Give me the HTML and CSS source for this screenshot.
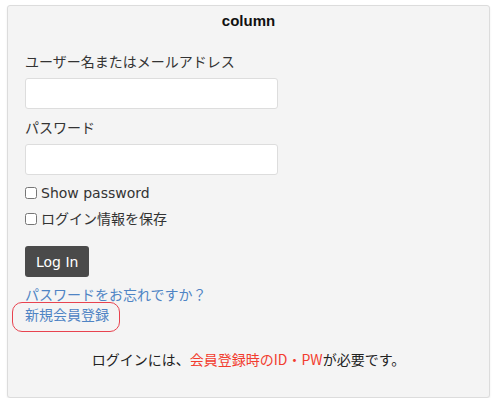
FILE: index.html
```html
<!DOCTYPE html>
<html lang="ja">
<head>
<meta charset="utf-8">
<link rel="stylesheet" href="styles.css">
</head>
<body>
<div class="panel">
  <h2 class="title">column</h2>
  <form class="login">
    <label class="label">ユーザー名またはメールアドレス</label>
    <input class="field" type="text">
    <label class="label label-pw">パスワード</label>
    <input class="field" type="password">
    <label class="check"><input type="checkbox" class="box"><span>Show password</span></label>
    <label class="check"><input type="checkbox" class="box"><span>ログイン情報を保存</span></label>
    <button type="button" class="btn">Log In</button>
  </form>
  <a class="link">パスワードをお忘れですか？</a>
  <div class="reg-wrap"><a class="link reg">新規会員登録</a></div>
  <p class="note">ログインには、<span class="red">会員登録時のID・PW</span>が必要です。</p>
</div>
</body>
</html>
```

FILE: styles.css
```css
html, body { margin: 0; padding: 0; background: #fff; }
body {
  font-family: "DejaVu Sans", "Noto Sans CJK JP", sans-serif;
  font-size: 14px;
  color: #333;
}
.panel {
  box-sizing: border-box;
  margin: 5px 0 0 7px;
  width: 483px;
  height: 393px;
  background: #f4f4f4;
  border: 1px solid #dcdcdc;
  border-radius: 3px;
  box-shadow: 0 1px 2px rgba(0,0,0,0.08);
  padding: 5px 17px 0 17px;
}
.title {
  margin: 0;
  text-align: center;
  font-family: "Liberation Sans", Arial, sans-serif;
  font-weight: bold;
  font-size: 15px;
  line-height: 20px;
  color: #111;
}
.login {
  display: flex;
  flex-direction: column;
  align-items: flex-start;
  margin-top: 18px;
}
.label {
  line-height: 24px;
  font-family: "Noto Sans CJK JP", sans-serif;
  color: #333;
}
.label-pw { margin-top: 6px; }
.field {
  box-sizing: border-box;
  width: 253px;
  height: 31px;
  margin: 5px 0 0 0;
  border: 1px solid #ddd;
  border-radius: 3px;
  background: #fff;
}
.check {
  display: flex;
  align-items: center;
  gap: 4px;
  line-height: 20px;
  margin-top: 8px;
}
.check + .check { margin-top: 6px; }
.check span { font-family: "DejaVu Sans", "Noto Sans CJK JP", sans-serif; }
.box {
  margin: 0;
  width: 12px;
  height: 12px;
}
.btn {
  margin-top: 17px;
  height: 31px;
  padding: 0 11px;
  border: none;
  border-radius: 3px;
  background: #4a4a4a;
  color: #fff;
  font-family: "DejaVu Sans", sans-serif;
  font-size: 14px;
}
.link {
  display: inline-block;
  color: #4f84c4;
  font-family: "Noto Sans CJK JP", sans-serif;
  line-height: 20px;
  margin-top: 7px;
}
.reg-wrap {
  margin-left: -13px;
  margin-top: -2px;
  width: 108px;
  box-sizing: border-box;
  border: 1px solid #e8434f;
  border-radius: 10px;
  padding: 1px 0 7px 12px;
}
.reg { margin-top: 0; }
.note {
  margin: 17px 0 0 0;
  text-align: center;
  font-family: "Noto Sans CJK JP", sans-serif;
  color: #222;
  line-height: 20px;
}
.red { color: #f23c2e; }
```
